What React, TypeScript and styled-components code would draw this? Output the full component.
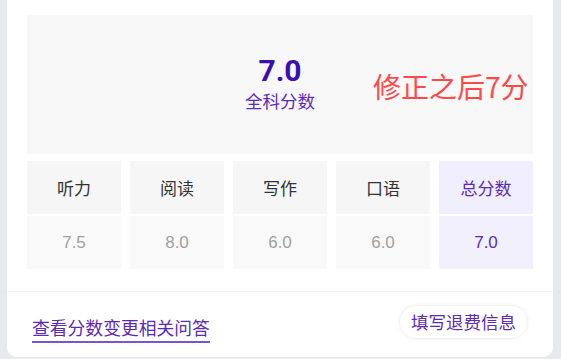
import styled, { createGlobalStyle } from "styled-components";

const Global = createGlobalStyle`
  html, body {
    margin: 0;
    padding: 0;
    background: #e7e9ed;
    font-family: "Noto Sans CJK SC", "Noto Sans", sans-serif;
  }
`;

const Page = styled.div`
  width: 561px;
  height: 359px;
  padding: 0 8px 0 7px;
  box-sizing: border-box;
  overflow: hidden;
`;

const Card = styled.div`
  background: #fff;
  border-radius: 0 0 10px 10px;
  display: flex;
  flex-direction: column;
`;

const Body = styled.div`
  padding: 15px 20px 22px;
  display: flex;
  flex-direction: column;
  gap: 7px;
  border-bottom: 1px solid #efeff1;
`;

const Summary = styled.div`
  position: relative;
  height: 139px;
  background: #f8f8f9;
  display: flex;
  flex-direction: column;
  align-items: center;
  justify-content: center;
`;

const Overall = styled.div`
  font-family: Roboto, "Noto Sans", sans-serif;
  font-weight: 700;
  font-size: 30px;
  line-height: 34px;
  color: #3a11ae;
  margin-top: -4px;
`;

const OverallLabel = styled.div`
  font-size: 17.5px;
  line-height: 22px;
  color: #5b2bb5;
  margin-top: 2px;
`;

const Note = styled.div`
  position: absolute;
  left: 346px;
  top: 54px;
  font-size: 28px;
  line-height: 34px;
  color: #ff4949;
`;

const Grid = styled.div`
  display: grid;
  grid-template-columns: repeat(5, 1fr);
  column-gap: 9px;
  row-gap: 2px;
`;

const Cell = styled.div<{ $head?: boolean; $total?: boolean }>`
  height: 53px;
  display: flex;
  align-items: center;
  justify-content: center;
  font-family: ${(p) => (p.$head ? `"Noto Sans CJK SC", sans-serif` : `"Liberation Sans", Arial, sans-serif`)};
  font-size: 17px;
  color: ${(p) => (p.$total ? "#5b2bb5" : p.$head ? "#333" : "#a0a0a0")};
  background: ${(p) =>
    p.$total ? (p.$head ? "#f1eefd" : "#f3f0fd") : p.$head ? "#f6f6f7" : "#f9f9f9"};
`;

const Footer = styled.div`
  height: 65px;
  display: flex;
  align-items: center;
  justify-content: space-between;
  padding: 0 25px;
`;

const Link = styled.a`
  font-size: 17.8px;
  line-height: 24px;
  color: #5b2bb5;
  text-decoration: none;
  border-bottom: 2px solid #7b52d1;
  padding-bottom: 2px;
  margin-top: 8px;
`;

const Pill = styled.button`
  font-family: "Noto Sans CJK SC", sans-serif;
  font-size: 17.5px;
  color: #5b2bb5;
  background: #fff;
  border: 1px solid #f2f2f4;
  border-radius: 17px;
  height: 34px;
  padding: 0 11px;
  box-shadow: 0 0 4px rgba(0, 0, 0, 0.05);
  margin-top: -6px;
`;

const subjects = [
  { name: "听力", score: "7.5" },
  { name: "阅读", score: "8.0" },
  { name: "写作", score: "6.0" },
  { name: "口语", score: "6.0" },
  { name: "总分数", score: "7.0", total: true },
];

export default function App() {
  return (
    <>
      <Global />
      <Page>
        <Card>
          <Body>
            <Summary>
              <Overall>7.0</Overall>
              <OverallLabel>全科分数</OverallLabel>
              <Note>修正之后7分</Note>
            </Summary>
            <Grid>
              {subjects.map((s) => (
                <Cell key={s.name} $head $total={s.total}>
                  {s.name}
                </Cell>
              ))}
              {subjects.map((s) => (
                <Cell key={s.name + "v"} $total={s.total}>
                  {s.score}
                </Cell>
              ))}
            </Grid>
          </Body>
          <Footer>
            <Link>查看分数变更相关问答</Link>
            <Pill>填写退费信息</Pill>
          </Footer>
        </Card>
      </Page>
    </>
  );
}
